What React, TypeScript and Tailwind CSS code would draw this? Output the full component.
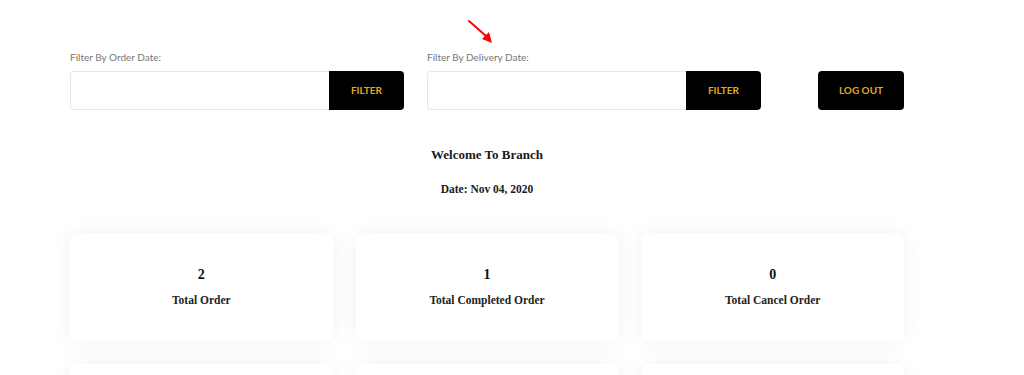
import React from 'react';

const STATS = [
  { value: '2', label: 'Total Order' },
  { value: '1', label: 'Total Completed Order' },
  { value: '0', label: 'Total Cancel Order' },
];

const SANS = { fontFamily: 'Lato, "Liberation Sans", sans-serif' };

function FilterField({ label }: { label: string }) {
  return (
    <div className="w-[334px]">
      <p className="text-[10px] text-[#777] mb-[7px] leading-[14px]" style={SANS}>{label}</p>
      <div className="flex h-[39px]">
        <input type="text" className="flex-1 min-w-0 border border-gray-200 border-r-0 rounded-l-[4px] bg-white focus:outline-none" />
        <button className="w-[75px] bg-black text-[#e0a91a] text-[10px] font-bold rounded-r-[4px]" style={SANS}>
          FILTER
        </button>
      </div>
    </div>
  );
}

export default function App() {
  return (
    <div className="bg-white min-h-[375px] w-[1024px] overflow-hidden relative" style={{ fontFamily: '"Liberation Serif", serif' }}>
      {/* red annotation arrow */}
      <svg className="absolute left-[466px] top-[18px]" width="30" height="28" viewBox="0 0 30 28">
        <line x1="3" y1="3" x2="20" y2="18" stroke="#f00" strokeWidth="2" strokeLinecap="round" />
        <polygon points="16,21 26,25 23,14" fill="#f00" />
      </svg>

      <div className="ml-[70px] w-[834px] pt-[50px]">
        {/* Filters */}
        <div className="flex items-end">
          <FilterField label="Filter By Order Date:" />
          <div className="ml-[23px]">
            <FilterField label="Filter By Delivery Date:" />
          </div>
          <button className="ml-auto w-[86px] h-[39px] bg-black text-[#e0a91a] text-[10px] font-bold rounded-[4px]" style={SANS}>
            LOG OUT
          </button>
        </div>

        <div className="text-center text-[#1a1a1a] mt-[36px]">
          <h1 className="text-[13px] font-bold leading-[18px]">Welcome To Branch</h1>
          <p className="text-[11.5px] font-bold mt-[17px] leading-[16px]">Date: Nov 04, 2020</p>
        </div>

        {/* Stats */}
        <div className="grid grid-cols-3 gap-[23px] mt-[36px]">
          {STATS.map(s => (
            <div key={s.label} className="h-[108px] bg-white rounded-[8px] shadow-[0_0_20px_rgba(0,0,0,0.06)] flex flex-col items-center justify-center">
              <span className="text-[14px] font-bold text-[#111] leading-[18px]">{s.value}</span>
              <span className="text-[11.5px] font-bold text-[#222] mt-[8px] leading-[16px]">{s.label}</span>
            </div>
          ))}
          {STATS.map(s => (
            <div key={s.label + '-2'} className="h-[108px] bg-white rounded-[8px] shadow-[0_0_20px_rgba(0,0,0,0.06)]" />
          ))}
        </div>
      </div>
    </div>
  );
}
